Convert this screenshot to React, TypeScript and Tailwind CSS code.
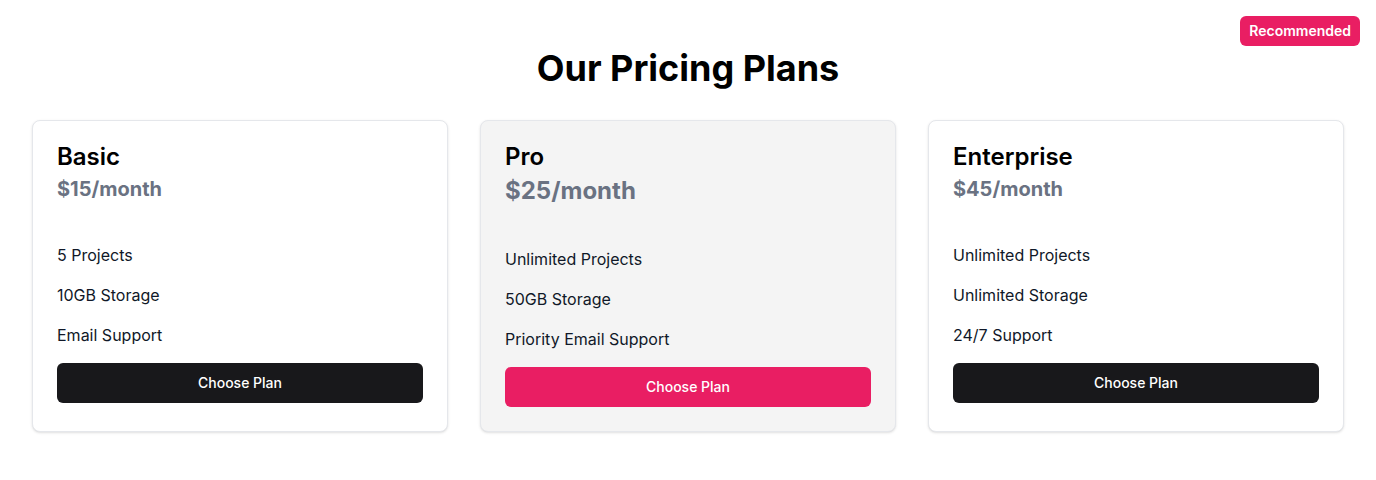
const plans = [
  {
    name: "Basic",
    price: "$15/month",
    features: ["5 Projects", "10GB Storage", "Email Support"],
    featured: false,
  },
  {
    name: "Pro",
    price: "$25/month",
    features: ["Unlimited Projects", "50GB Storage", "Priority Email Support"],
    featured: true,
  },
  {
    name: "Enterprise",
    price: "$45/month",
    features: ["Unlimited Projects", "Unlimited Storage", "24/7 Support"],
    featured: false,
  },
];

export default function App() {
  return (
    <div className="relative min-h-screen bg-white px-8 pt-12 pb-12 font-['Inter',sans-serif]">
      {/* Badge */}
      <span className="absolute top-4 right-4 rounded-md bg-[#e91e63] px-[9px] py-[5px] text-sm font-semibold text-white">
        Recommended
      </span>

      <h1 className="mb-8 text-center text-4xl font-bold text-black">
        Our Pricing Plans
      </h1>

      <div className="grid grid-cols-3 gap-8">
        {plans.map((p) => (
          <div
            key={p.name}
            className={
              p.featured
                ? "rounded-lg border border-gray-200 bg-[#f4f4f4] p-6 shadow-sm"
                : "rounded-lg border border-gray-200 bg-white p-6 shadow-sm"
            }
          >
            <h2 className="text-[24px] leading-[24px] font-semibold text-black">
              {p.name}
            </h2>
            <p
              className={
                p.featured
                  ? "mt-[6px] text-2xl font-bold text-gray-500"
                  : "mt-[6px] text-xl font-bold text-gray-500"
              }
            >
              {p.price}
            </p>
            <ul className="mt-8 text-base text-gray-900">
              {p.features.map((f) => (
                <li key={f} className="py-2">
                  {f}
                </li>
              ))}
            </ul>
            <button
              className={
                p.featured
                  ? "mt-2 h-10 w-full rounded-md bg-[#e91e63] text-sm font-medium text-white"
                  : "mt-2 h-10 w-full rounded-md bg-[#18181b] text-sm font-medium text-white"
              }
            >
              Choose Plan
            </button>
          </div>
        ))}
      </div>
    </div>
  );
}
